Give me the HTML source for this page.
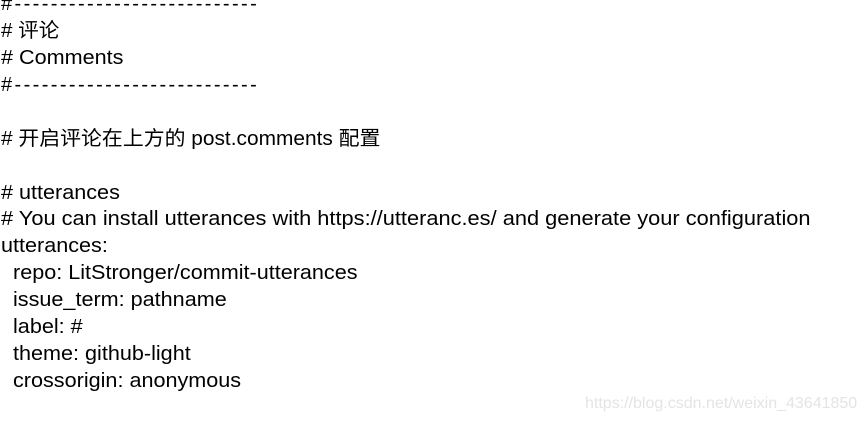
<!DOCTYPE html>
<html><head><meta charset="utf-8"><style>
body{margin:0;width:866px;height:421px;background:#fff;overflow:hidden;position:relative;font-family:"Liberation Sans","Noto Sans CJK SC",sans-serif;font-size:20px;color:#000}
.l{position:absolute;left:1px;white-space:pre;line-height:27px;height:27px;transform:scaleX(1.08);transform-origin:left}
.d{letter-spacing:2.4px;transform:none}
.w{position:absolute;left:585px;top:395px;font-size:16px;color:#e4e4e4;white-space:pre;font-family:"Liberation Sans",sans-serif}
</style></head><body>
<div class="l d" style="top:-9px">#---------------------------</div>
<div class="l" style="top:18px;transform:scaleX(1.03)"># 评论</div>
<div class="l" style="top:45px"># Comments</div>
<div class="l d" style="top:72px">#---------------------------</div>
<div class="l" style="top:126px;transform:scaleX(1.044)"># 开启评论在上方的 post.comments 配置</div>
<div class="l" style="top:180px"># utterances</div>
<div class="l" style="top:206px;transform:scaleX(1.09)"># You can install utterances with https://utteranc.es/ and generate your configuration</div>
<div class="l" style="top:233px">utterances:</div>
<div class="l" style="top:260px">  repo: LitStronger/commit-utterances</div>
<div class="l" style="top:287px">  issue_term: pathname</div>
<div class="l" style="top:314px">  label: #</div>
<div class="l" style="top:341px">  theme: github-light</div>
<div class="l" style="top:368px">  crossorigin: anonymous</div>
<div class="w">https://blog.csdn.net/weixin_43641850</div>
</body></html>
